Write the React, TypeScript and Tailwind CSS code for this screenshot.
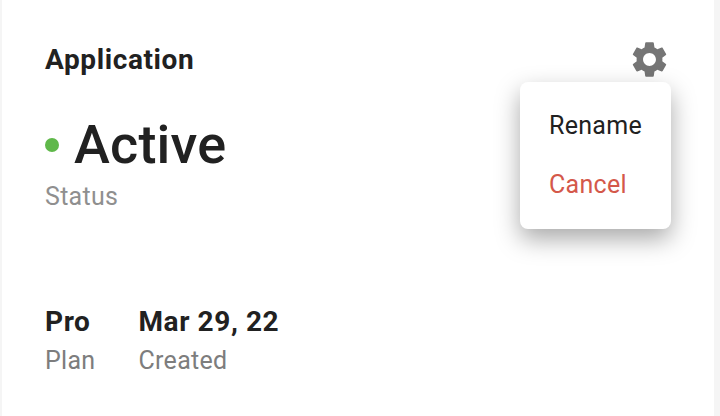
const App = () => {
  return (
    <div className="h-[416px] w-[720px] overflow-hidden bg-[#f5f5f5] pl-[2px] pr-[6px] font-['Roboto',sans-serif]">
      <div className="relative h-full bg-white pl-[43px] pt-[42px]">
        <div className="text-[28px] font-bold leading-[36px] tracking-[0.6px] text-[#212121]">Application</div>

        <svg
          viewBox="0 0 24 24"
          className="absolute left-[626px] top-[38px] h-[43px] w-[43px] fill-[#757575]"
        >
          <path d="M19.14 12.94c.04-.3.06-.61.06-.94 0-.32-.02-.64-.07-.94l2.03-1.58c.18-.14.23-.41.12-.61l-1.92-3.32c-.12-.22-.37-.29-.59-.22l-2.39.96c-.5-.38-1.03-.7-1.62-.94l-.36-2.54c-.04-.24-.24-.41-.48-.41h-3.84c-.24 0-.43.17-.47.41l-.36 2.54c-.59.24-1.13.57-1.62.94l-2.39-.96c-.22-.08-.47 0-.59.22L2.74 8.87c-.12.21-.08.47.12.61l2.03 1.58c-.05.3-.09.63-.09.94s.02.64.07.94l-2.03 1.58c-.18.14-.23.41-.12.61l1.92 3.32c.12.22.37.29.59.22l2.39-.96c.5.38 1.03.7 1.62.94l.36 2.54c.05.24.24.41.48.41h3.84c.24 0 .44-.17.47-.41l.36-2.54c.59-.24 1.13-.56 1.62-.94l2.39.96c.22.08.47 0 .59-.22l1.92-3.32c.12-.22.07-.47-.12-.61l-2.01-1.58zM12 15.6c-1.98 0-3.6-1.62-3.6-3.6s1.62-3.6 3.6-3.6 3.6 1.62 3.6 3.6-1.62 3.6-3.6 3.6z" />
        </svg>

        <div className="mt-[35px] flex items-center">
          <span className="h-[14px] w-[14px] rounded-full bg-[#5fb84a]" />
          <span className="ml-[15px] text-[54px] font-medium leading-[64px] tracking-[0.2px] text-[#212121]">Active</span>
        </div>
        <div className="mt-[4px] text-[25px] leading-[32px] tracking-[0.3px] text-[#8f8f8f]">Status</div>

        <div className="mt-[91px] flex gap-[43px]">
          <div>
            <div className="text-[28px] font-bold leading-[36px] tracking-[0.6px] text-[#212121]">Pro</div>
            <div className="mt-[5px] text-[25px] leading-[32px] tracking-[0.3px] text-[#7d7d7d]">Plan</div>
          </div>
          <div>
            <div className="text-[28px] font-bold leading-[36px] tracking-[0.6px] text-[#212121]">Mar 29, 22</div>
            <div className="mt-[5px] text-[25px] leading-[32px] tracking-[0.3px] text-[#7d7d7d]">Created</div>
          </div>
        </div>

        <div className="absolute left-[518px] top-[82px] flex h-[147px] w-[151px] flex-col gap-[27px] rounded-[8px] bg-white pl-[29px] pt-[28px] shadow-[0_10px_24px_rgba(0,0,0,0.34)]">
          <div className="text-[25px] leading-[32px] tracking-[0.3px] text-[#212121]">Rename</div>
          <div className="text-[25px] leading-[32px] tracking-[0.3px] text-[#d4584a]">Cancel</div>
        </div>
      </div>
    </div>
  );
};

export default App;
